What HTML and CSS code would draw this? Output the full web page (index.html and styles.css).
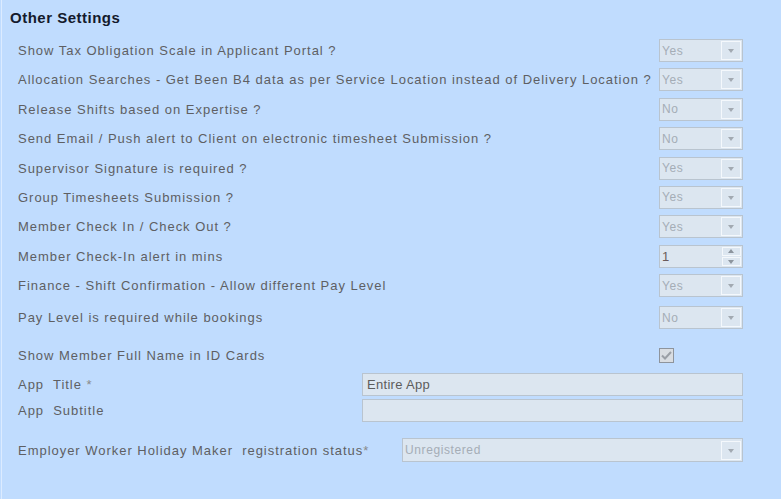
FILE: index.html
```html
<!DOCTYPE html>
<html>
<head>
  <title>Other Settings</title>
  <link rel="stylesheet" href="styles.css">
</head>
<body>
  <div class="panel">
    <h2>Other Settings</h2>

    <div class="rows">
      <div class="row">
        <label>Show Tax Obligation Scale in Applicant Portal ?</label>
        <div class="combo"><span>Yes</span><i class="drop"></i></div>
      </div>
      <div class="row">
        <label>Allocation Searches - Get Been B4 data as per Service Location instead of Delivery Location ?</label>
        <div class="combo"><span>Yes</span><i class="drop"></i></div>
      </div>
      <div class="row">
        <label>Release Shifts based on Expertise ?</label>
        <div class="combo"><span>No</span><i class="drop"></i></div>
      </div>
      <div class="row">
        <label>Send Email / Push alert to Client on electronic timesheet Submission ?</label>
        <div class="combo"><span>No</span><i class="drop"></i></div>
      </div>
      <div class="row">
        <label>Supervisor Signature is required ?</label>
        <div class="combo"><span>Yes</span><i class="drop"></i></div>
      </div>
      <div class="row">
        <label>Group Timesheets Submission ?</label>
        <div class="combo"><span>Yes</span><i class="drop"></i></div>
      </div>
      <div class="row">
        <label>Member Check In / Check Out ?</label>
        <div class="combo"><span>Yes</span><i class="drop"></i></div>
      </div>
      <div class="row">
        <label>Member Check-In alert in mins</label>
        <div class="combo spin">
          <span>1</span>
          <div class="spin-btns"><i class="up"></i><i class="down"></i></div>
        </div>
      </div>
      <div class="row">
        <label>Finance - Shift Confirmation - Allow different Pay Level</label>
        <div class="combo"><span>Yes</span><i class="drop"></i></div>
      </div>
      <div class="row last">
        <label>Pay Level is required while bookings</label>
        <div class="combo"><span>No</span><i class="drop"></i></div>
      </div>
    </div>

    <div class="row check-row">
      <label>Show Member Full Name in ID Cards</label>
      <div class="check-wrap">
        <span class="check">
          <svg width="11" height="9" viewBox="0 0 11 9"><path d="M1 4.5 L4 7.5 L10 1" fill="none" stroke="#9a9fa6" stroke-width="2"/></svg>
        </span>
      </div>
    </div>

    <div class="row text-row">
      <label>App&nbsp; Title <em>*</em></label>
      <div class="textbox">Entire App</div>
    </div>
    <div class="row text-row">
      <label>App&nbsp; Subtitle</label>
      <div class="textbox"></div>
    </div>

    <div class="row status-row">
      <label>Employer Worker Holiday Maker&nbsp; registration status<em>*</em></label>
      <div class="combo wide"><span>Unregistered</span><i class="drop"></i></div>
    </div>
  </div>
</body>
</html>
```

FILE: styles.css
```css
body {
  margin: 0;
  background: #c0dcfe;
  font-family: "Liberation Sans", Arial, sans-serif;
}

.panel {
  height: 499px;
  border-left: 1px solid #dcebff;
  margin-left: 1px;
  padding: 8px 38px 0 7px;
  box-sizing: border-box;
}

h2 {
  margin: 0 0 11px 1px;
  font-size: 15px;
  font-weight: bold;
  color: #141a2c;
  line-height: 20px;
  letter-spacing: 0.5px;
}

.rows {
  display: flex;
  flex-direction: column;
  gap: 6.4px;
}

.row {
  display: flex;
  align-items: center;
  justify-content: space-between;
  padding-left: 9px;
}

.row label {
  font-size: 13px;
  color: #5e5f63;
  white-space: nowrap;
  letter-spacing: 0.97px;
}

.row label em {
  font-style: normal;
  color: #8a8a8a;
}

.row.last {
  margin-top: 2.6px;
}

.combo {
  width: 84px;
  height: 23px;
  box-sizing: border-box;
  border: 1px solid #b9c4cf;
  background: #dce6f0;
  display: flex;
  align-items: center;
  justify-content: space-between;
  padding: 1px 1px 1px 2px;
}

.combo span {
  font-size: 12px;
  color: #a5adb6;
  letter-spacing: 0.6px;
}

.combo .drop {
  width: 20px;
  height: 19px;
  box-sizing: border-box;
  border: 1px solid #f4f8fc;
  position: relative;
}

.combo .drop::after {
  content: "";
  position: absolute;
  left: 6px;
  top: 7px;
  border-left: 3.5px solid transparent;
  border-right: 3.5px solid transparent;
  border-top: 4px solid #a2a9b1;
}

.spin span {
  color: #6a5a5a;
  font-size: 13px;
}

.spin-btns {
  display: flex;
  flex-direction: column;
  gap: 1px;
}

.spin-btns i {
  width: 19px;
  height: 9px;
  box-sizing: border-box;
  border: 1px solid #f4f8fc;
  position: relative;
}

.spin-btns .up::after,
.spin-btns .down::after {
  content: "";
  position: absolute;
  left: 5px;
  border-left: 3.5px solid transparent;
  border-right: 3.5px solid transparent;
}

.spin-btns .up::after {
  top: 1px;
  border-bottom: 4px solid #8d959e;
}

.spin-btns .down::after {
  top: 2px;
  border-top: 4px solid #8d959e;
}

.check-row {
  margin-top: 17px;
  height: 18px;
}

.check-wrap {
  width: 84px;
}

.check {
  display: flex;
  align-items: center;
  justify-content: center;
  width: 15px;
  height: 15px;
  box-sizing: border-box;
  border: 1px solid #8e949c;
  background: #d9dde2;
}

.text-row {
  margin-top: 3px;
}

.check-row + .text-row {
  margin-top: 9px;
}

.textbox {
  width: 381px;
  height: 23px;
  box-sizing: border-box;
  border: 1px solid #b9c4cf;
  background: #dce6f0;
  font-size: 13px;
  color: #5c5c5c;
  padding: 3px 0 0 4px;
  letter-spacing: 0.3px;
}

.status-row {
  margin-top: 16px;
}

.combo.wide {
  width: 341px;
  height: 24px;
}
```
